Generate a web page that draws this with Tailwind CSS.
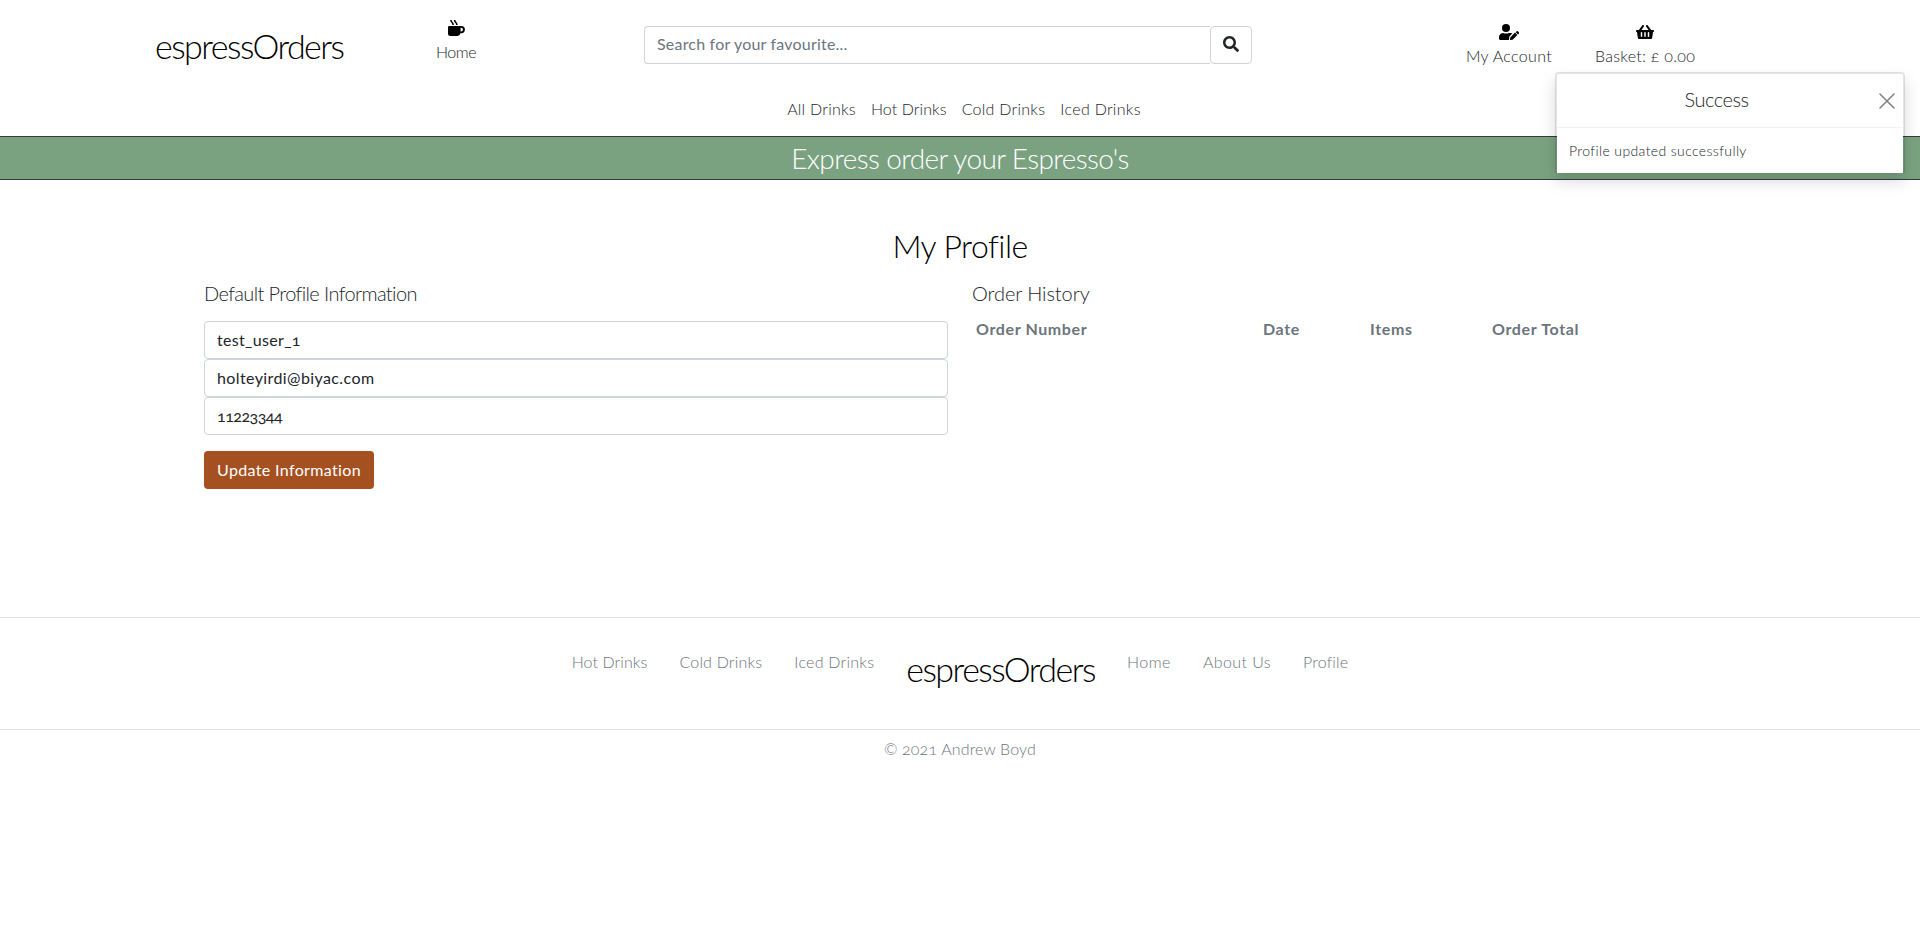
<!DOCTYPE html>
<html lang="en">
<head>
<meta charset="utf-8">
<title>espressOrders</title>
<script src="https://cdn.jsdelivr.net/npm/@tailwindcss/browser@4"></script>
</head>
<body class="bg-white font-['Lato',sans-serif] oldstyle-nums text-base text-[#212529] h-[927px] overflow-hidden">

<header class="flex h-[97px] items-start whitespace-nowrap">
  <a class="ml-[155px] w-[200px] pt-[26px] text-[34px] leading-10 font-light tracking-[-1.55px] text-black">espressOrders</a>
  <a class="ml-[61px] flex w-20 flex-col items-center pt-5 font-light">
    <svg class="ml-px h-4 w-[17px] overflow-visible" viewBox="0 0 17 16" fill="none"><path d="M0 7.2Q0 6 1.2 6H13.3a3.6 3.6 0 0 1 0 7.2H12.5Q11.7 16 9.6 16H2.5Q0 16 0 13.5ZM12.6 7.8V11.4H13.2a1.8 1.8 0 0 0 0-3.6Z" fill="#000" fill-rule="evenodd"/><path d="M2.9 0Q3.1 1.7 4.1 2.5T5.2 5M6.6 0Q6.8 1.7 7.8 2.5T8.9 5" stroke="#000" stroke-width="1.6"/></svg>
    <span class="mt-1 leading-6 tracking-[-0.5px]">Home</span>
  </a>
  <form class="mt-[26px] ml-[148px] flex h-[38px] w-[608px]">
    <div class="w-[566px] rounded-l border border-r-0 border-[#ced4da] px-3 py-[5px] leading-6 tracking-[0.2px] text-[#6c757d]">Search for your favourite...</div>
    <button type="button" class="flex w-[42px] items-center justify-center rounded border border-[#ced4da] pb-0.5" aria-label="Search">
      <svg class="h-4 w-4" viewBox="0 0 512 512" fill="#212529"><path d="M505 442.700 405.300 343c-4.500-4.500-10.600-7-17-7H372c27.600-35.300 44-79.700 44-128C416 93.100 322.900 0 208 0S0 93.100 0 208s93.100 208 208 208c48.300 0 92.700-16.400 128-44v16.300c0 6.400 2.500 12.500 7 17l99.700 99.700c9.400 9.400 24.600 9.400 33.900 0l28.300-28.300c9.400-9.400 9.400-24.600.1-34zM208 336c-70.700 0-128-57.200-128-128 0-70.700 57.200-128 128-128 70.700 0 128 57.200 128 128 0 70.700-57.200 128-128 128z"/></svg>
    </button>
  </form>
  <a class="ml-[207px] flex w-[100px] flex-col items-center pt-6 font-light">
    <svg class="h-4 w-5" viewBox="0 0 640 512" fill="#000"><circle cx="224" cy="128" r="128"/><path d="M314 288c-54 24-126 24-180 0C60 288 0 348 0 422v42c0 27 21 48 48 48h275c-4-9-4-18-3-27l7-61c2-15 8-29 19-39l86-86c-24-7-70-11-118-11zM359 428l-7 68c-1 9 6 16 15 15l68-7 154-154-76-76zM633 260l-30-30c-10-10-26-10-36 0l-31 31 76 76 21-21c10-10 10-46 0-56z"/></svg>
    <span class="mt-1 leading-6 tracking-[0.35px]">My Account</span>
  </a>
  <a class="ml-[31px] flex w-[110px] flex-col items-center pt-6 font-light">
    <svg class="h-4 w-[18px]" viewBox="0 0 576 512" fill="#000"><path d="M576 216v16c0 13-11 24-24 24h-8l-26 182c-3 24-23 42-47 42H105c-24 0-44-18-47-42L32 256h-8c-13 0-24-11-24-24v-16c0-13 11-24 24-24h67L198 45c11-15 32-18 47-7s18 31 7 45l-79 109h230L324 83c-11-14-8-35 7-45s36-8 47 7l107 147h67c13 0 24 11 24 24zM312 392V280a24 24 0 0 0-48 0v112a24 24 0 0 0 48 0zm112 0V280a24 24 0 0 0-48 0v112a24 24 0 0 0 48 0zm-224 0V280a24 24 0 0 0-48 0v112a24 24 0 0 0 48 0z"/></svg>
    <span class="mt-1 leading-6 tracking-[0.28px]">Basket: £ 0.00</span>
  </a>
</header>

<nav class="flex h-[39px] justify-center gap-[15px] pl-2 leading-6 font-light whitespace-nowrap">
  <a class="tracking-[0.25px]">All Drinks</a>
  <a class="tracking-[0.09px]">Hot Drinks</a>
  <a class="tracking-[0.27px]">Cold Drinks</a>
  <a class="tracking-[0.3px]">Iced Drinks</a>
</nav>

<div class="h-11 border-y border-[#343a40] bg-[#7aa280] text-center text-[28px] leading-[42px] font-light tracking-[-0.63px] text-white">Express order your Espresso's</div>

<main class="h-[437px] pt-[46px]">
  <h1 class="text-center text-[32px] leading-10 font-light tracking-[-0.53px] text-black">My Profile</h1>
  <div class="mt-[15px] flex px-[204px]">
    <section class="w-[744px]">
      <h2 class="text-xl leading-6 font-light tracking-[-0.62px]">Default Profile Information</h2>
      <div class="mt-4 h-[38px] rounded border border-[#ced4da] px-3 py-1.5 leading-6 tracking-[0.32px]">test_user_1</div>
      <div class="h-[38px] rounded border border-[#ced4da] px-3 py-1.5 leading-6 tracking-[0.4px]">holteyirdi@biyac.com</div>
      <div class="h-[38px] rounded border border-[#ced4da] px-3 py-1.5 leading-6 tracking-[-0.5px]">11223344</div>
      <button type="button" class="mt-4 h-[38px] w-[170px] rounded bg-[#a55020] leading-6 tracking-[0.35px] text-white">Update Information</button>
    </section>
    <section class="ml-6 w-[744px]">
      <h2 class="text-xl leading-6 font-light tracking-[-0.08px]">Order History</h2>
      <div class="mt-3 flex pl-1 leading-6 font-bold text-[#6c757d]">
        <span class="w-[287px] tracking-[0.62px]">Order Number</span>
        <span class="w-[107px] tracking-[0.6px]">Date</span>
        <span class="w-[122px] tracking-[0.65px]">Items</span>
        <span class="tracking-[0.66px]">Order Total</span>
      </div>
    </section>
  </div>
</main>

<footer class="font-light text-[#6c757d]">
  <div class="flex h-[113px] items-start justify-center gap-8 border-y border-[#dee2e6] pt-8 leading-6 whitespace-nowrap">
    <a class="tracking-[0.09px]">Hot Drinks</a>
    <a class="tracking-[0.2px]">Cold Drinks</a>
    <a class="tracking-[0.25px]">Iced Drinks</a>
    <a class="-mt-px text-[34px] leading-10 tracking-[-1.53px] text-black">espressOrders</a>
    <a class="tracking-[0.5px]">Home</a>
    <a class="tracking-[0.4px]">About Us</a>
    <a class="tracking-[0.2px]">Profile</a>
  </div>
  <p class="pt-[7px] text-center leading-6 tracking-[0.16px]">© 2021 Andrew Boyd</p>
</footer>

<!-- Toast notification -->
<div class="absolute top-[72px] left-[1555px] w-[350px] rounded-t border-2 border-b-0 border-black/10 bg-white bg-clip-padding font-light shadow-[0_8px_16px_rgba(0,0,0,0.15)]">
  <div class="flex h-[54px] items-center border-b border-black/5 pr-2">
    <strong class="grow pr-[3px] pb-[3px] text-center text-xl leading-6 font-light tracking-[-0.5px]">Success</strong>
    <svg class="h-4 w-4" viewBox="0 0 16 16" stroke="#808080" stroke-width="1.5" stroke-linecap="round"><path d="M1 1 15 15M15 1 1 15"/></svg>
  </div>
  <div class="h-[45px] px-3 pt-3 text-sm leading-[21px] tracking-[0.38px]">Profile updated successfully</div>
</div>
</body>
</html>
